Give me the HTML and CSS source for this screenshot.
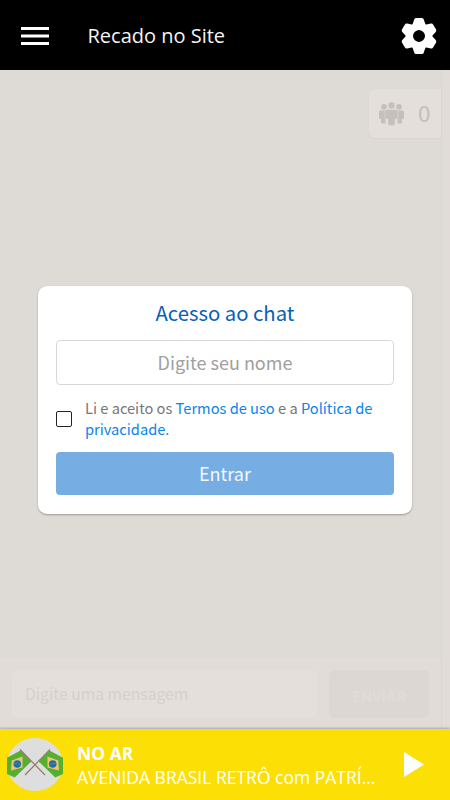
FILE: index.html
```html
<!DOCTYPE html>
<html lang="pt-BR">
<head>
  <meta charset="UTF-8">
  <meta name="viewport" content="width=device-width, initial-scale=1">
  <title>Recado no Site</title>
  <link rel="stylesheet" href="styles.css">
</head>
<body>
  <header class="topbar">
    <button class="icon-btn menu" aria-label="Menu">
      <svg width="28" height="18" viewBox="0 0 28 18" fill="#fff"><path d="M0 0h28v3H0zM0 7.5h28v3H0zM0 15h28v3H0z"/></svg>
    </button>
    <h1>Recado no Site</h1>
    <button class="icon-btn settings" aria-label="Configurações">
      <svg width="36" height="38" viewBox="-18 -19 36 38" fill="#fff">
        <defs><path id="tooth" d="M-7-10-4.8-16.5Q-4.4-18-3-18H3Q4.4-18 4.8-16.5L7-10z"/></defs>
        <use href="#tooth"/>
        <use href="#tooth" transform="rotate(60)"/>
        <use href="#tooth" transform="rotate(120)"/>
        <use href="#tooth" transform="rotate(180)"/>
        <use href="#tooth" transform="rotate(240)"/>
        <use href="#tooth" transform="rotate(300)"/>
        <circle r="9.5" fill="none" stroke="#fff" stroke-width="7.5"/>
        <circle r="5.8" fill="#000"/>
      </svg>
    </button>
  </header>

  <main class="chat">
    <div class="chat-area">
      <div class="online">
        <svg width="26" height="24" viewBox="0 0 26 24" fill="#c5c0bb">
          <circle cx="5" cy="4.8" r="2.9"/><circle cx="20" cy="4.8" r="2.9"/>
          <path d="M1.5 8.5h5v13H3.2a1.2 1.2 0 0 1-1.2-1.2V17H1.3A1.3 1.3 0 0 1 0 15.7V10a1.5 1.5 0 0 1 1.5-1.5zM18.5 8.5h5A1.5 1.5 0 0 1 25 10v5.7a1.3 1.3 0 0 1-1.3 1.3H23v3.3a1.2 1.2 0 0 1-1.2 1.2h-3.3z"/>
          <g stroke="#e4dfdb" stroke-width=".5">
            <circle cx="12.5" cy="3.4" r="3.5"/>
            <path d="M8 7.5h9a2 2 0 0 1 2 2v6a1.5 1.5 0 0 1-1.5 1.5H16v5a1.6 1.6 0 0 1-1.6 1.6h-3.8A1.6 1.6 0 0 1 9 22v-5H7.5A1.5 1.5 0 0 1 6 15.5v-6a2 2 0 0 1 2-2z"/>
          </g>
        </svg>
        <span>0</span>
      </div>
      <form class="composer">
        <input class="message" type="text" placeholder="Digite uma mensagem">
        <button class="send" type="button">ENVIAR</button>
      </form>
    </div>

    <div class="overlay">
      <form class="login">
        <h2>Acesso ao chat</h2>
        <input class="name" type="text" placeholder="Digite seu nome">
        <div class="terms">
          <input type="checkbox" id="accept">
          <label for="accept">Li e aceito os <a href="#">Termos de uso</a> e a <a href="#">Política de privacidade</a>.</label>
        </div>
        <button class="enter" type="button">Entrar</button>
      </form>
    </div>
  </main>

  <footer class="player">
    <svg class="cover" width="56" height="53" viewBox="0 0 56 53">
      <defs>
        <g id="flag">
          <path d="M13.5 12.5 24.3 23.5 7.7 39.5 0 36V19.8z" fill="#55b030"/>
          <path d="M15.5 18.5 15.5 29.5 4 32.5 4.8 22.5z" fill="#f3c374"/>
          <circle cx="10.3" cy="26" r="3.8" fill="#1f6fa0"/>
          <path d="M6.8 25.3q4-1 7 2" fill="none" stroke="#5d9db8" stroke-width=".6"/>
          <path d="M13 11.5 38 37" fill="none" stroke="#94796a" stroke-width="1.2"/>
        </g>
      </defs>
      <ellipse cx="28" cy="26.5" rx="28" ry="26.5" fill="#dedede"/>
      <use href="#flag"/>
      <use href="#flag" transform="translate(56 0) scale(-1 1)"/>
    </svg>
    <div class="now">
      <strong>NO AR</strong>
      <p>AVENIDA BRASIL RETRÔ com PATRÍ...</p>
    </div>
    <button class="icon-btn play" aria-label="Tocar">
      <svg width="20" height="25" viewBox="0 0 20 25" fill="#fff"><path d="M0 0 20 12.5 0 25z"/></svg>
    </button>
  </footer>
</body>
</html>
```
FILE: styles.css
```css
* {
  box-sizing: border-box;
}
body {
  margin: 0;
  height: 800px;
  display: flex;
  flex-direction: column;
  overflow: hidden;
  font-family: 'Open Sans', sans-serif;
}
h1, h2, p {
  margin: 0;
  font-weight: 400;
}
button, input {
  font-family: inherit;
  margin: 0;
}
svg {
  display: block;
}
.icon-btn {
  border: none;
  padding: 0;
  background: none;
}

/* top bar */
.topbar {
  height: 70px;
  flex: none;
  display: flex;
  align-items: center;
  padding: 2px 13px 0 21px;
  background: #000;
}
.topbar h1 {
  margin-left: 38.5px;
  flex: 1;
  font-size: 20px;
  line-height: 28px;
  color: #f4f4f4;
}

/* chat */
.chat {
  position: relative;
  flex: 1;
  background: #e1dcd8;
  font-family: 'Noto Sans CJK SC', sans-serif;
}
.chat-area {
  width: 442px;
  height: 100%;
  display: flex;
  flex-direction: column;
  justify-content: space-between;
  background: #dedad6;
  border-right: 1px solid #dbd6d2;
}
.online {
  align-self: flex-end;
  width: 72px;
  height: 49px;
  margin-top: 19px;
  padding-left: 10px;
  display: flex;
  align-items: center;
  gap: 13px;
  border-radius: 6px 0 0 6px;
  background: #e4dfdb;
  box-shadow: 0 1px 1px #d9d4d0;
  font-size: 22.5px;
  line-height: 30px;
  color: #c3beb9;
}
.online span {
  padding-bottom: 3px;
}
.composer {
  height: 71px;
  display: flex;
  gap: 12px;
  padding: 12px 12px 11px;
  background: #e1dcd7;
}
.message {
  flex: 1;
  min-width: 0;
  padding: 0 13px 2px;
  border: none;
  border-radius: 5px;
  background: #e4dfdb;
  font-size: 15.7px;
}
.message::placeholder {
  color: #d5d0cc;
}
.send {
  width: 100px;
  padding: 3px 0 0;
  border: none;
  border-radius: 5px;
  background: #dcd7d3;
  color: #e0dbd7;
  font-size: 15px;
  font-weight: 700;
}

/* login dialog */
.overlay {
  position: absolute;
  inset: 0;
  display: flex;
  align-items: center;
  justify-content: center;
  padding-top: 1px;
}
.login {
  width: 374px;
  height: 228px;
  padding: 12px 18px 19px;
  border-radius: 9px;
  background: #fff;
  box-shadow: 0 1px 2px rgba(0, 0, 0, 0.3);
}
.login h2 {
  height: 42px;
  font-size: 20.3px;
  line-height: 28px;
  text-align: center;
  color: #0860b6;
}
.name {
  display: block;
  width: 100%;
  height: 45px;
  padding: 0 2px 2px;
  border: 1px solid #d8d8d8;
  border-radius: 4px;
  font-size: 18px;
  text-align: center;
}
.name::placeholder {
  color: #a0a0a0;
}
.terms {
  height: 67px;
  padding-top: 12px;
  display: flex;
  align-items: flex-start;
  gap: 13px;
  font-size: 14.65px;
  line-height: 21px;
  color: #777;
}
.terms input {
  appearance: none;
  flex: none;
  width: 16px;
  height: 16px;
  margin-top: 14px;
  border: 1px solid #222;
  border-radius: 2px;
}
.terms a {
  color: #0a84ee;
  text-decoration: none;
}
.enter {
  display: block;
  width: 100%;
  height: 43px;
  padding: 0 0 2px;
  border: none;
  border-radius: 4px;
  background: #76ade2;
  color: #f4f8fd;
  font-size: 18px;
}

/* player */
.player {
  height: 71px;
  flex: none;
  position: relative;
  display: flex;
  align-items: center;
  padding: 0 26px 0 7px;
  background: #fcdf05;
  box-shadow: 0 -1px 2px #aaa8b2;
  color: #fff;
}
.now {
  width: 300px;
  margin: 1px 27px 0 14px;
  font-size: 17.5px;
  line-height: 24px;
}
.now strong {
  display: block;
}
.now p {
  white-space: nowrap;
}
```
